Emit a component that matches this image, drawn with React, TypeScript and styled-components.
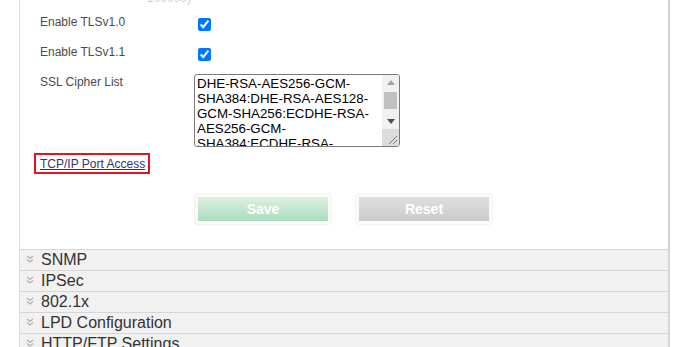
import styled, { createGlobalStyle } from "styled-components";

const GlobalStyle = createGlobalStyle`
  html, body {
    margin: 0;
    padding: 0;
    background: #ffffff;
    font-family: "Liberation Sans", Arial, sans-serif;
    overflow: hidden;
  }
`;

const Page = styled.div`
  width: 651px;
  margin-left: 19px;
`;

const Panel = styled.div`
  border-left: 1px solid #dcdcdc;
  border-right: 2px solid #d4d4d4;
  padding-bottom: 24px;
`;

const Hint = styled.div`
  margin-top: -9px;
  padding-left: 127px;
  height: 23px;
  font-size: 12px;
  line-height: 14px;
  color: #cfcfcf;
`;

const FormRow = styled.div<{ $height: number }>`
  display: grid;
  grid-template-columns: 174px 1fr;
  align-items: start;
  height: ${(p) => p.$height}px;
`;

const Label = styled.label`
  padding: 1px 0 0 20px;
  font-size: 12px;
  line-height: 14px;
  color: #4a4a4a;
`;

const Check = styled.input.attrs({ type: "checkbox" })`
  width: 13px;
  height: 13px;
  margin: 4px 0 0 4px;
  accent-color: #0075ff;
`;

const CipherWrap = styled.div`
  position: relative;
  width: 206px;
  height: 73px;
`;

const CipherBox = styled.textarea`
  box-sizing: border-box;
  display: block;
  width: 206px;
  height: 73px;
  margin: 0;
  padding: 1px 19px 1px 2px;
  border: 1px solid #7a7a7a;
  border-radius: 3px;
  font-family: "Liberation Sans", Arial, sans-serif;
  font-size: 13.33px;
  line-height: 15px;
  color: #000;
  overflow: hidden;
  resize: none;
`;

/* drawn scrollbar, laid over the right edge of the textarea */
const ScrollRail = styled.div`
  position: absolute;
  top: 1px;
  right: 1px;
  bottom: 1px;
  width: 17px;
  display: flex;
  flex-direction: column;
  background: #f1f1f1;
  border-radius: 0 2px 2px 0;
  overflow: hidden;
`;

const ScrollButton = styled.div`
  height: 15px;
  display: flex;
  align-items: center;
  justify-content: center;
`;

const ScrollTrack = styled.div`
  flex: 1;
  padding: 2px 2px 0;
`;

const ScrollThumb = styled.div`
  height: 17px;
  background: #c1c1c1;
`;

const Grip = styled.div`
  height: 17px;
  background: #dcdcdc;
`;

function Arrow({ dir, color }: { dir: "up" | "down"; color: string }) {
  return (
    <svg width="8" height="5" viewBox="0 0 8 5">
      <path d={dir === "up" ? "M0 5 L4 0 L8 5 Z" : "M0 0 L8 0 L4 5 Z"} fill={color} />
    </svg>
  );
}

function ResizeLines() {
  return (
    <svg width="17" height="17" viewBox="0 0 17 17">
      <path d="M15 7 L7 15 M15 11 L11 15" stroke="#7d7d7d" strokeWidth="1" />
    </svg>
  );
}

const LinkRow = styled.div`
  padding: 6px 0 0 14px;
`;

const HighlightLink = styled.a`
  display: inline-block;
  border: 2px solid #e8141c;
  padding: 2px 3px 1px 4px;
  font-size: 12px;
  line-height: 14px;
  color: #34346a;
  text-decoration: underline;
`;

const ButtonRow = styled.div`
  display: flex;
  gap: 23px;
  margin: 19px 0 0 174px;
`;

const ButtonFrame = styled.div`
  padding: 3px;
  border: 1px solid #f3f3f3;
  border-radius: 4px;
  background: #fbfbfb;
`;

const ActionButton = styled.button<{ $tone: "save" | "reset" }>`
  display: block;
  width: 130px;
  height: 24px;
  border: none;
  padding: 0;
  font-family: "Liberation Sans", Arial, sans-serif;
  font-size: 14px;
  font-weight: bold;
  color: #ffffff;
  background: ${(p) =>
    p.$tone === "save"
      ? "linear-gradient(#ddf1e0, #aadbbc)"
      : "linear-gradient(#dfdfdf, #cacaca)"};
`;

const Sections = styled.div`
  border-left: 1px solid #dcdcdc;
  border-right: 2px solid #d4d4d4;
`;

const SectionHeader = styled.div`
  display: flex;
  align-items: center;
  height: 20px;
  border-top: 1px solid #d6d6d6;
  background: #f1f1f1;
  font-size: 16px;
  line-height: 20px;
  color: #333333;
`;

const Chevron = styled.svg`
  width: 8px;
  height: 8px;
  margin: 0 7px 0 6px;
  position: relative;
  top: -1px;
`;

function DoubleChevron() {
  return (
    <Chevron viewBox="0 0 8 8">
      <path d="M1 1 L4 3.5 L7 1 M1 4.5 L4 7 L7 4.5" fill="none" stroke="#b2b2b2" strokeWidth="1.3" />
    </Chevron>
  );
}

const cipherList =
  "DHE-RSA-AES256-GCM-SHA384:DHE-RSA-AES128-GCM-SHA256:ECDHE-RSA-AES256-GCM-SHA384:ECDHE-RSA-AES128-GCM-SHA256:ECDHE-ECDSA-AES256-GCM-SHA384:ECDHE-ECDSA-AES128-GCM-SHA256";

const sections = ["SNMP", "IPSec", "802.1x", "LPD Configuration", "HTTP/FTP Settings"];

export default function App() {
  return (
    <>
      <GlobalStyle />
      <Page>
        <Panel>
          <Hint>100000)</Hint>
          <FormRow $height={30}>
            <Label>Enable TLSv1.0</Label>
            <div>
              <Check defaultChecked />
            </div>
          </FormRow>
          <FormRow $height={30}>
            <Label>Enable TLSv1.1</Label>
            <div>
              <Check defaultChecked />
            </div>
          </FormRow>
          <FormRow $height={73}>
            <Label>SSL Cipher List</Label>
            <CipherWrap>
              <CipherBox defaultValue={cipherList} />
              <ScrollRail>
                <ScrollButton>
                  <Arrow dir="up" color="#a3a3a3" />
                </ScrollButton>
                <ScrollTrack>
                  <ScrollThumb />
                </ScrollTrack>
                <ScrollButton>
                  <Arrow dir="down" color="#505050" />
                </ScrollButton>
                <Grip>
                  <ResizeLines />
                </Grip>
              </ScrollRail>
            </CipherWrap>
          </FormRow>
          <LinkRow>
            <HighlightLink href="#">TCP/IP Port Access</HighlightLink>
          </LinkRow>
          <ButtonRow>
            <ButtonFrame>
              <ActionButton $tone="save">Save</ActionButton>
            </ButtonFrame>
            <ButtonFrame>
              <ActionButton $tone="reset">Reset</ActionButton>
            </ButtonFrame>
          </ButtonRow>
        </Panel>
        <Sections>
          {sections.map((name) => (
            <SectionHeader key={name}>
              <DoubleChevron />
              {name}
            </SectionHeader>
          ))}
        </Sections>
      </Page>
    </>
  );
}
